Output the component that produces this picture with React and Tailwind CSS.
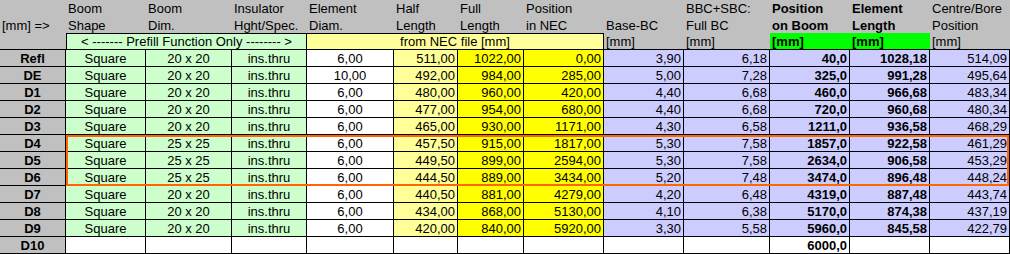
const GRID =
  'grid grid-cols-[66px_80px_86px_75px_87px_64px_66px_80px_80px_86px_80px_80px_80px]';

const HEAD_TOP = [
  '', 'Boom', 'Boom', 'Insulator', 'Element', 'Half', 'Full', 'Position', '',
  'BBC+SBC:', 'Position', 'Element', 'Centre/Bore',
];
const HEAD_BOTTOM = [
  '[mm] =>', 'Shape', 'Dim.', 'Hght/Spec.', 'Diam.', 'Length', 'Length', 'in NEC',
  'Base-BC', 'Full BC', 'on Boom', 'Length', 'Position',
];

// label, shape, dim, insulator, diam, half, full, nec, base, full bc, pos, len, centre
const ROWS = [
  ['Refl', 'Square', '20 x 20', 'ins.thru', '6,00', '511,00', '1022,00', '0,00', '3,90', '6,18', '40,0', '1028,18', '514,09'],
  ['DE', 'Square', '20 x 20', 'ins.thru', '10,00', '492,00', '984,00', '285,00', '5,00', '7,28', '325,0', '991,28', '495,64'],
  ['D1', 'Square', '20 x 20', 'ins.thru', '6,00', '480,00', '960,00', '420,00', '4,40', '6,68', '460,0', '966,68', '483,34'],
  ['D2', 'Square', '20 x 20', 'ins.thru', '6,00', '477,00', '954,00', '680,00', '4,40', '6,68', '720,0', '960,68', '480,34'],
  ['D3', 'Square', '20 x 20', 'ins.thru', '6,00', '465,00', '930,00', '1171,00', '4,30', '6,58', '1211,0', '936,58', '468,29'],
  ['D4', 'Square', '25 x 25', 'ins.thru', '6,00', '457,50', '915,00', '1817,00', '5,30', '7,58', '1857,0', '922,58', '461,29'],
  ['D5', 'Square', '25 x 25', 'ins.thru', '6,00', '449,50', '899,00', '2594,00', '5,30', '7,58', '2634,0', '906,58', '453,29'],
  ['D6', 'Square', '25 x 25', 'ins.thru', '6,00', '444,50', '889,00', '3434,00', '5,20', '7,48', '3474,0', '896,48', '448,24'],
  ['D7', 'Square', '20 x 20', 'ins.thru', '6,00', '440,50', '881,00', '4279,00', '4,20', '6,48', '4319,0', '887,48', '443,74'],
  ['D8', 'Square', '20 x 20', 'ins.thru', '6,00', '434,00', '868,00', '5130,00', '4,10', '6,38', '5170,0', '874,38', '437,19'],
  ['D9', 'Square', '20 x 20', 'ins.thru', '6,00', '420,00', '840,00', '5920,00', '3,30', '5,58', '5960,0', '845,58', '422,79'],
];

// background + alignment per column for the data rows
const COL_STYLE = [
  'bg-[#c0c0c0] justify-center font-bold',
  'bg-[#ccffcc] justify-center',
  'bg-[#ccffcc] justify-center',
  'bg-[#ccffcc] justify-center',
  'bg-white justify-center',
  'bg-[#ffff99] justify-end',
  'bg-[#ffff00] justify-end',
  'bg-[#ffff00] justify-end',
  'bg-[#ccccff] justify-end',
  'bg-[#ccccff] justify-end',
  'bg-[#ccccff] justify-end font-bold',
  'bg-[#ccccff] justify-end font-bold',
  'bg-[#ccccff] justify-end',
];

function HeadCell({ children, bold }) {
  return (
    <div className={`flex items-center px-[2px] whitespace-nowrap ${bold ? 'font-bold' : ''}`}>
      {children}
    </div>
  );
}

export default function App() {
  return (
    <div
      className="relative w-[1010px] h-[254px] overflow-hidden bg-[#c0c0c0] text-[13px] leading-none text-black"
      style={{ fontFamily: '"Liberation Sans", Arial, sans-serif' }}
    >
      {/* header rows */}
      <div className={`${GRID} h-[17px]`}>
        {HEAD_TOP.map((t, i) => (
          <HeadCell key={i} bold={i === 10 || i === 11}>{t}</HeadCell>
        ))}
      </div>
      <div className={`${GRID} h-[16px]`}>
        {HEAD_BOTTOM.map((t, i) => (
          <HeadCell key={i} bold={i === 10 || i === 11}>{t}</HeadCell>
        ))}
      </div>
      <div className={`${GRID} h-[17px]`}>
        <div className="border-b border-black" />
        <div className="col-span-3 flex items-center justify-center whitespace-nowrap bg-[#ccffcc] border-t border-l border-r border-b border-black">
          {'< ------- Prefill Function Only -------- >'}
        </div>
        <div className="col-span-4 flex items-center justify-center whitespace-nowrap bg-[#ffff99] border-t border-r border-b border-black">
          from NEC file [mm]
        </div>
        <div className="flex items-center px-[2px] border-b border-black">[mm]</div>
        <div className="flex items-center px-[2px] border-b border-black">[mm]</div>
        <div className="col-span-2 grid grid-cols-2 bg-[#00ff00] font-bold border-b border-black">
          <div className="flex items-center px-[2px]">[mm]</div>
          <div className="flex items-center px-[2px]">[mm]</div>
        </div>
        <div className="flex items-center px-[2px] border-b border-black">[mm]</div>
      </div>

      {/* data rows */}
      {ROWS.map((row) => (
        <div key={row[0]} className={`${GRID} h-[17px]`}>
          {row.map((v, i) => (
            <div
              key={i}
              className={`flex items-center px-[2px] whitespace-nowrap border-r border-b border-black ${COL_STYLE[i]}`}
            >
              {v}
            </div>
          ))}
        </div>
      ))}
      <div className={`${GRID} h-[17px]`}>
        {COL_STYLE.map((_, i) => (
          <div
            key={i}
            className={`flex items-center px-[2px] whitespace-nowrap border-r border-b border-black ${
              i === 0 ? 'bg-[#c0c0c0] justify-center font-bold' : 'bg-white justify-end font-bold'
            }`}
          >
            {i === 0 ? 'D10' : i === 10 ? '6000,0' : ''}
          </div>
        ))}
      </div>

      {/* orange highlight around D4–D6 */}
      <div className="absolute left-[66px] top-[135px] w-[943px] h-[51px] border-2 border-[#ff6600] pointer-events-none" />
    </div>
  );
}
